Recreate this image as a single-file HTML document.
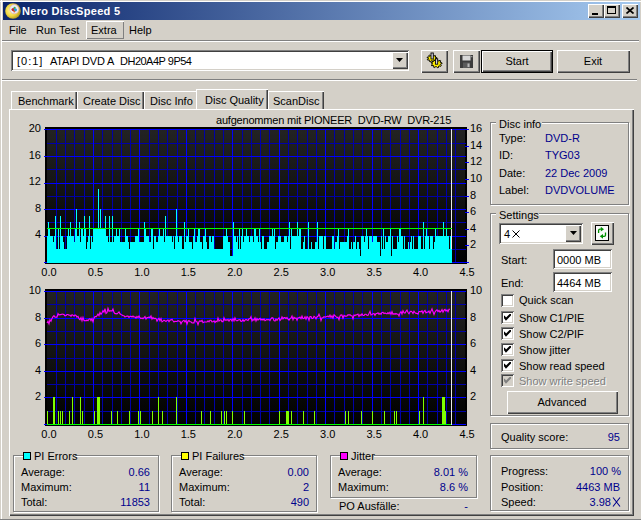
<!DOCTYPE html><html><head><meta charset="utf-8"><style>
html,body{margin:0;padding:0;width:641px;height:520px;overflow:hidden;background:#D4D0C8}
.t{position:absolute;font-family:"Liberation Sans",sans-serif;font-size:11px;line-height:13px;white-space:pre;letter-spacing:0px}
</style></head><body><div style="position:absolute;left:0px;top:0px;width:641px;height:520px;background:#D4D0C8"></div>
<div style="position:absolute;left:0px;top:1px;width:641px;height:1px;background:#FFFFFF"></div>
<div style="position:absolute;left:1px;top:0px;width:1px;height:520px;background:#FFFFFF"></div>
<div style="position:absolute;left:0px;top:519px;width:641px;height:1px;background:#808080"></div>
<div style="position:absolute;left:3px;top:2px;width:637px;height:18px;background:linear-gradient(to right,#0A246A,#A6CAF0)"></div>
<svg style="position:absolute;left:5px;top:3px" width="16" height="16" viewBox="0 0 16 16">
<defs><radialGradient id="gd" cx="40%" cy="45%" r="65%"><stop offset="0" stop-color="#FFF8B0"/><stop offset="0.55" stop-color="#F0D840"/><stop offset="1" stop-color="#A08818"/></radialGradient></defs>
<circle cx="8" cy="8" r="7.8" fill="url(#gd)"/>
<circle cx="9.3" cy="6.2" r="4.6" fill="#E8EEF4" stroke="#E0A0B0" stroke-width="0.6"/>
<circle cx="8.2" cy="6.6" r="1.7" fill="#C82828"/>
<circle cx="10.4" cy="6.8" r="1.6" fill="#2898E0"/>
<circle cx="9.6" cy="4.8" r="1.1" fill="#40A850"/>
<circle cx="9.3" cy="8.6" r="1" fill="#E06030"/>
</svg>
<div class="t" style="left:22px;top:5px;color:#fff;font-weight:bold;font-size:11px;letter-spacing:0.3px">Nero DiscSpeed 5</div>
<div style="position:absolute;left:588px;top:4px;width:16px;height:14px;background:#D4D0C8;box-shadow:inset 1px 1px 0 #FFFFFF,inset -1px -1px 0 #404040,inset -2px -2px 0 #808080;"></div>
<div style="position:absolute;left:604px;top:4px;width:16px;height:14px;background:#D4D0C8;box-shadow:inset 1px 1px 0 #FFFFFF,inset -1px -1px 0 #404040,inset -2px -2px 0 #808080;"></div>
<div style="position:absolute;left:622px;top:4px;width:16px;height:14px;background:#D4D0C8;box-shadow:inset 1px 1px 0 #FFFFFF,inset -1px -1px 0 #404040,inset -2px -2px 0 #808080;"></div>
<div style="position:absolute;left:592px;top:13px;width:6px;height:2px;background:#000"></div>
<div style="position:absolute;left:607px;top:6px;width:9px;height:8px;border:1px solid #000;border-top-width:2px;box-sizing:border-box"></div>
<svg style="position:absolute;left:626px;top:7px" width="8" height="7" viewBox="0 0 8 7"><path d="M0.5 0.5 L7.5 6.5 M7.5 0.5 L0.5 6.5" stroke="#000" stroke-width="1.7"/></svg>
<div style="position:absolute;left:86px;top:21px;width:38px;height:18px;box-shadow:inset 1px 1px 0 #FFFFFF,inset -1px -1px 0 #808080;"></div>
<div class="t" style="left:9px;top:24px;color:#000;">File</div>
<div class="t" style="left:36px;top:24px;color:#000;">Run Test</div>
<div class="t" style="left:91px;top:24px;color:#000;">Extra</div>
<div class="t" style="left:129px;top:24px;color:#000;">Help</div>
<div style="position:absolute;left:2px;top:40px;width:637px;height:1px;background:#808080"></div>
<div style="position:absolute;left:2px;top:41px;width:637px;height:1px;background:#FFFFFF"></div>
<div style="position:absolute;left:11px;top:50px;width:398px;height:21px;background:#fff;box-shadow:inset 1px 1px 0 #808080,inset -1px -1px 0 #FFFFFF,inset 2px 2px 0 #404040,inset -2px -2px 0 #D4D0C8;"></div>
<div class="t" style="left:17px;top:55px;color:#000;letter-spacing:1px">[0:1]</div>
<div class="t" style="left:50px;top:55px;color:#000;letter-spacing:-0.2px">ATAPI DVD A</div>
<div class="t" style="left:120px;top:55px;color:#000;letter-spacing:-0.5px">DH20A4P 9P54</div>
<div style="position:absolute;left:392px;top:52px;width:16px;height:17px;background:#D4D0C8;box-shadow:inset 1px 1px 0 #FFFFFF,inset -1px -1px 0 #404040,inset -2px -2px 0 #808080;"></div>
<svg style="position:absolute;left:396px;top:58px" width="7" height="4"><path d="M0 0H7L3.5 4Z" fill="#000"/></svg>
<div style="position:absolute;left:421px;top:50px;width:27px;height:23px;background:#D4D0C8;box-shadow:inset 1px 1px 0 #FFFFFF,inset -1px -1px 0 #404040,inset -2px -2px 0 #808080;"></div>
<svg style="position:absolute;left:420px;top:50px" width="28" height="22" viewBox="0 0 28 22"><g stroke="#000" stroke-width="1" fill="#FFF000"><polygon points="12.00,4.70 12.87,4.75 13.23,5.86 13.80,6.06 15.21,5.54 15.83,5.99 15.12,7.00 15.38,7.41 16.92,7.67 17.00,8.30 15.55,8.75 15.38,9.19 16.33,10.10 15.83,10.61 14.31,10.29 13.80,10.54 13.71,11.68 12.87,11.85 12.00,10.89 11.37,10.85 10.29,11.68 9.50,11.42 9.69,10.29 9.24,9.97 7.67,10.10 7.30,9.53 8.45,8.75 8.40,8.30 7.08,7.67 7.30,7.07 8.88,7.00 9.24,6.63 8.79,5.54 9.50,5.18 10.77,5.86 11.37,5.75"/><polygon points="16.50,9.40 17.47,9.46 17.88,10.76 18.52,10.98 20.10,10.38 20.79,10.90 19.99,12.09 20.29,12.57 22.01,12.87 22.10,13.60 20.47,14.13 20.29,14.63 21.35,15.70 20.79,16.30 19.09,15.92 18.52,16.22 18.42,17.55 17.47,17.74 16.50,16.62 15.80,16.58 14.58,17.55 13.70,17.24 13.91,15.92 13.41,15.54 11.65,15.70 11.24,15.04 12.53,14.13 12.47,13.60 10.99,12.87 11.24,12.16 13.01,12.09 13.41,11.66 12.90,10.38 13.70,9.96 15.12,10.76 15.80,10.62"/></g><g stroke="#000" stroke-width="0.9" fill="#D0D0E0"><rect x="11" y="3" width="2.3" height="6"/><rect x="15.4" y="8.8" width="2.3" height="5.4"/></g></svg>
<div style="position:absolute;left:453px;top:50px;width:27px;height:23px;background:#D4D0C8;box-shadow:inset 1px 1px 0 #FFFFFF,inset -1px -1px 0 #404040,inset -2px -2px 0 #808080;"></div>
<svg style="position:absolute;left:460px;top:55px" width="13" height="13" viewBox="0 0 13 13">
<rect x="0" y="0" width="13" height="13" fill="#3C3C3C"/>
<rect x="2.5" y="0.5" width="8" height="5" fill="#D8D8D8"/>
<rect x="3" y="7.5" width="7" height="5.5" fill="#5A5A5A"/>
<rect x="7.5" y="8.5" width="2" height="3.5" fill="#B8B8B8"/>
<rect x="11.3" y="1.2" width="1" height="1" fill="#E0E0E0"/>
</svg>
<div style="position:absolute;left:481px;top:50px;width:72px;height:23px;background:#000"></div>
<div style="position:absolute;left:482px;top:51px;width:70px;height:21px;background:#D4D0C8;box-shadow:inset 1px 1px 0 #FFFFFF,inset -1px -1px 0 #404040,inset -2px -2px 0 #808080;"></div>
<div class="t" style="left:467px;width:100px;top:55px;color:#000;text-align:center;">Start</div>
<div style="position:absolute;left:557px;top:50px;width:73px;height:23px;background:#D4D0C8;box-shadow:inset 1px 1px 0 #FFFFFF,inset -1px -1px 0 #404040,inset -2px -2px 0 #808080;"></div>
<div class="t" style="left:543px;width:100px;top:55px;color:#000;text-align:center;">Exit</div>
<div style="position:absolute;left:2px;top:79px;width:635px;height:1px;background:#808080"></div>
<div style="position:absolute;left:2px;top:80px;width:635px;height:1px;background:#FFFFFF"></div>
<div style="position:absolute;left:11px;top:91px;width:66px;height:18px;background:#D4D0C8;box-shadow:inset 1px 1px 0 #FFFFFF,inset -1px 0 0 #404040,inset -2px 0 0 #808080;"></div>
<div class="t" style="left:18px;top:95px;color:#000;">Benchmark</div>
<div style="position:absolute;left:77px;top:91px;width:67px;height:18px;background:#D4D0C8;box-shadow:inset 1px 1px 0 #FFFFFF,inset -1px 0 0 #404040,inset -2px 0 0 #808080;"></div>
<div class="t" style="left:83px;top:95px;color:#000;">Create Disc</div>
<div style="position:absolute;left:144px;top:91px;width:54px;height:18px;background:#D4D0C8;box-shadow:inset 1px 1px 0 #FFFFFF,inset -1px 0 0 #404040,inset -2px 0 0 #808080;"></div>
<div class="t" style="left:150px;top:95px;color:#000;">Disc Info</div>
<div style="position:absolute;left:268px;top:91px;width:56px;height:18px;background:#D4D0C8;box-shadow:inset 1px 1px 0 #FFFFFF,inset -1px 0 0 #404040,inset -2px 0 0 #808080;"></div>
<div class="t" style="left:273px;top:95px;color:#000;">ScanDisc</div>
<div style="position:absolute;left:9px;top:109px;width:625px;height:407px;background:#D4D0C8;box-shadow:inset 1px 1px 0 #FFFFFF,inset -1px -1px 0 #404040,inset -2px -2px 0 #808080;"></div>
<div style="position:absolute;left:196px;top:89px;width:72px;height:20px;background:#D4D0C8;box-shadow:inset 1px 1px 0 #FFFFFF,inset -1px 0 0 #404040,inset -2px 0 0 #808080;"></div>
<div class="t" style="left:205px;top:94px;color:#000;">Disc Quality</div>
<div style="position:absolute;left:197px;top:109px;width:68px;height:1px;background:#FFFFFF"></div>
<svg style="position:absolute;left:0;top:0" width="641" height="520">
<defs><linearGradient id="bg" x1="0" y1="0" x2="0" y2="1"><stop offset="0" stop-color="#232323"/><stop offset="1" stop-color="#000"/></linearGradient></defs>
<rect x="45" y="127" width="422" height="137" fill="#000"/>
<rect x="47" y="129" width="418" height="134" fill="url(#bg)"/>
<path d="M56.5 129V263.4 M65.5 129V263.4 M74.5 129V263.4 M84.5 129V263.4 M102.5 129V263.4 M112.5 129V263.4 M121.5 129V263.4 M130.5 129V263.4 M149.5 129V263.4 M158.5 129V263.4 M167.5 129V263.4 M177.5 129V263.4 M195.5 129V263.4 M204.5 129V263.4 M214.5 129V263.4 M223.5 129V263.4 M242.5 129V263.4 M251.5 129V263.4 M260.5 129V263.4 M269.5 129V263.4 M288.5 129V263.4 M297.5 129V263.4 M307.5 129V263.4 M316.5 129V263.4 M334.5 129V263.4 M344.5 129V263.4 M353.5 129V263.4 M362.5 129V263.4 M381.5 129V263.4 M390.5 129V263.4 M400.5 129V263.4 M409.5 129V263.4 M427.5 129V263.4 M437.5 129V263.4 M446.5 129V263.4 M455.5 129V263.4 M47 249.5H466 M47 222.5H466 M47 196.5H466 M47 169.5H466 M47 143.5H466" stroke="#0000A8" stroke-width="1" shape-rendering="crispEdges"/>
<path d="M93.5 129V263.4 M139.5 129V263.4 M186.5 129V263.4 M232.5 129V263.4 M279.5 129V263.4 M325.5 129V263.4 M372.5 129V263.4 M418.5 129V263.4 M44 262.5H466 M44 236.5H466 M44 209.5H466 M44 183.5H466 M44 156.5H466 M44 129.5H466" stroke="#0000FF" stroke-width="1" shape-rendering="crispEdges"/>
<path d="M465 262.5H469 M465 245.5H469 M465 229.5H469 M465 212.5H469 M465 196.5H469 M465 179.5H469 M465 162.5H469 M465 146.5H469 M465 129.5H469" stroke="#0000FF" stroke-width="1" shape-rendering="crispEdges"/>
<path d="M451.5 129V263" stroke="#E8E8E8" stroke-width="1" shape-rendering="crispEdges"/>
<path d="M47 263V236H48V222H49V229H50V236H51V236H52V236H53V242H54V236H55V216H56V249H57V249H58V229H59V249H60V216H61V236H62V236H63V242H64V249H65V249H66V249H67V236H68V229H69V236H70V222H71V236H72V236H73V236H74V242H75V229H76V209H77V236H78V236H79V222H80V242H81V229H82V229H83V236H84V216H85V229H86V249H87V242H88V236H89V216H90V249H91V236H92V242H93V229H94V229H95V229H96V229H97V229H98V189H99V229H100V209H101V229H102V229H103V229H104V229H105V216H106V236H107V236H108V242H109V216H110V242H111V242H112V216H113V242H114V236H115V236H116V229H117V236H118V236H119V229H120V242H121V242H122V242H123V242H124V242H125V229H126V236H127V236H128V242H129V249H130V242H131V242H132V242H133V242H134V242H135V236H136V236H137V236H138V229H139V242H140V242H141V242H142V242H143V242H144V222H145V229H146V236H147V236H148V236H149V242H150V242H151V229H152V229H153V249H154V236H155V236H156V242H157V242H158V236H159V229H160V236H161V236H162V236H163V229H164V242H165V216H166V236H167V236H168V236H169V236H170V236H171V236H172V242H173V236H174V249H175V236H176V209H177V236H178V242H179V236H180V236H181V236H182V249H183V249H184V222H185V242H186V236H187V236H188V229H189V242H190V242H191V242H192V249H193V236H194V229H195V242H196V242H197V236H198V229H199V229H200V242H201V242H202V249H203V236H204V236H205V229H206V242H207V249H208V249H209V236H210V236H211V242H212V236H213V236H214V249H215V249H216V249H217V249H218V249H219V249H220V249H221V249H222V249H223V236H224V236H225V236H226V229H227V236H228V242H229V242H230V256H231V256H232V256H233V222H234V236H235V236H236V242H237V236H238V249H239V229H240V249H241V236H242V229H243V242H244V236H245V236H246V229H247V236H248V236H249V242H250V236H251V236H252V236H253V242H254V229H255V229H256V236H257V236H258V242H259V229H260V242H261V249H262V236H263V236H264V249H265V249H266V249H267V242H268V242H269V236H270V236H271V236H272V229H273V236H274V229H275V249H276V242H277V242H278V236H279V236H280V236H281V242H282V242H283V242H284V236H285V236H286V236H287V242H288V236H289V222H290V249H291V229H292V236H293V236H294V236H295V236H296V236H297V222H298V236H299V229H300V229H301V249H302V249H303V242H304V236H305V249H306V249H307V249H308V222H309V249H310V249H311V242H312V249H313V249H314V249H315V242H316V242H317V222H318V249H319V236H320V236H321V236H322V236H323V249H324V236H325V236H326V249H327V249H328V249H329V249H330V249H331V249H332V236H333V236H334V249H335V242H336V242H337V236H338V229H339V249H340V242H341V242H342V242H343V242H344V242H345V242H346V242H347V236H348V229H349V249H350V249H351V242H352V249H353V242H354V242H355V236H356V249H357V242H358V242H359V249H360V256H361V236H362V236H363V236H364V242H365V236H366V229H367V236H368V249H369V236H370V236H371V236H372V242H373V236H374V236H375V236H376V236H377V242H378V242H379V242H380V256H381V236H382V249H383V229H384V249H385V236H386V242H387V242H388V236H389V236H390V229H391V256H392V236H393V249H394V249H395V249H396V249H397V236H398V242H399V229H400V229H401V236H402V236H403V249H404V236H405V249H406V249H407V249H408V242H409V249H410V242H411V236H412V249H413V236H414V249H415V249H416V249H417V249H418V236H419V236H420V236H421V249H422V249H423V222H424V249H425V236H426V229H427V236H428V236H429V249H430V236H431V236H432V236H433V249H434V242H435V229H436V236H437V236H438V236H439V236H440V236H441V236H442V236H443V222H444V236H445V236H446V229H447V236H448V236H449V249H450V236H451V249H452V263Z" fill="#00FFFF" shape-rendering="crispEdges"/>
<path d="M47 228.5H452" stroke="#00FF00" stroke-width="1" shape-rendering="crispEdges"/>
<rect x="45" y="289" width="422" height="137" fill="#000"/>
<rect x="47" y="291" width="418" height="134" fill="url(#bg)"/>
<path d="M56.5 291V425 M65.5 291V425 M74.5 291V425 M84.5 291V425 M102.5 291V425 M112.5 291V425 M121.5 291V425 M130.5 291V425 M149.5 291V425 M158.5 291V425 M167.5 291V425 M177.5 291V425 M195.5 291V425 M204.5 291V425 M214.5 291V425 M223.5 291V425 M242.5 291V425 M251.5 291V425 M260.5 291V425 M269.5 291V425 M288.5 291V425 M297.5 291V425 M307.5 291V425 M316.5 291V425 M334.5 291V425 M344.5 291V425 M353.5 291V425 M362.5 291V425 M381.5 291V425 M390.5 291V425 M400.5 291V425 M409.5 291V425 M427.5 291V425 M437.5 291V425 M446.5 291V425 M455.5 291V425 M47 411.5H466 M47 384.5H466 M47 358.5H466 M47 331.5H466 M47 304.5H466" stroke="#0000A8" stroke-width="1" shape-rendering="crispEdges"/>
<path d="M93.5 291V425 M139.5 291V425 M186.5 291V425 M232.5 291V425 M279.5 291V425 M325.5 291V425 M372.5 291V425 M418.5 291V425 M44 424.5H466 M44 397.5H466 M44 371.5H466 M44 344.5H466 M44 318.5H466 M44 291.5H466" stroke="#0000FF" stroke-width="1" shape-rendering="crispEdges"/>
<rect x="47" y="411" width="1" height="14" fill="#80FF00"/>
<rect x="53" y="397" width="2" height="28" fill="#80FF00"/>
<rect x="58" y="411" width="1" height="14" fill="#80FF00"/>
<rect x="60" y="411" width="1" height="14" fill="#80FF00"/>
<rect x="62" y="411" width="1" height="14" fill="#80FF00"/>
<rect x="69" y="411" width="1" height="14" fill="#80FF00"/>
<rect x="72" y="397" width="1" height="28" fill="#80FF00"/>
<rect x="80" y="397" width="1" height="28" fill="#80FF00"/>
<rect x="82" y="411" width="1" height="14" fill="#80FF00"/>
<rect x="94" y="411" width="1" height="14" fill="#80FF00"/>
<rect x="97" y="397" width="3" height="28" fill="#80FF00"/>
<rect x="111" y="411" width="1" height="14" fill="#80FF00"/>
<rect x="117" y="411" width="1" height="14" fill="#80FF00"/>
<rect x="129" y="411" width="1" height="14" fill="#80FF00"/>
<rect x="138" y="411" width="1" height="14" fill="#80FF00"/>
<rect x="140" y="411" width="1" height="14" fill="#80FF00"/>
<rect x="152" y="411" width="1" height="14" fill="#80FF00"/>
<rect x="158" y="397" width="1" height="28" fill="#80FF00"/>
<rect x="162" y="411" width="1" height="14" fill="#80FF00"/>
<rect x="176" y="397" width="1" height="28" fill="#80FF00"/>
<rect x="201" y="411" width="1" height="14" fill="#80FF00"/>
<rect x="210" y="411" width="1" height="14" fill="#80FF00"/>
<rect x="221" y="411" width="1" height="14" fill="#80FF00"/>
<rect x="224" y="411" width="1" height="14" fill="#80FF00"/>
<rect x="226" y="411" width="1" height="14" fill="#80FF00"/>
<rect x="232" y="411" width="1" height="14" fill="#80FF00"/>
<rect x="244" y="411" width="1" height="14" fill="#80FF00"/>
<rect x="279" y="411" width="1" height="14" fill="#80FF00"/>
<rect x="286" y="411" width="2" height="14" fill="#80FF00"/>
<rect x="288" y="411" width="1" height="14" fill="#80FF00"/>
<rect x="291" y="411" width="1" height="14" fill="#80FF00"/>
<rect x="303" y="411" width="1" height="14" fill="#80FF00"/>
<rect x="314" y="411" width="1" height="14" fill="#80FF00"/>
<rect x="345" y="411" width="1" height="14" fill="#80FF00"/>
<rect x="348" y="411" width="1" height="14" fill="#80FF00"/>
<rect x="361" y="411" width="1" height="14" fill="#80FF00"/>
<rect x="372" y="411" width="1" height="14" fill="#80FF00"/>
<rect x="384" y="411" width="1" height="14" fill="#80FF00"/>
<rect x="394" y="411" width="1" height="14" fill="#80FF00"/>
<rect x="396" y="411" width="1" height="14" fill="#80FF00"/>
<rect x="419" y="411" width="1" height="14" fill="#80FF00"/>
<rect x="423" y="397" width="1" height="28" fill="#80FF00"/>
<rect x="442" y="397" width="3" height="28" fill="#80FF00"/>
<rect x="445" y="411" width="1" height="14" fill="#80FF00"/>
<path d="M47 424.5H452" stroke="#00FF00" stroke-width="1" shape-rendering="crispEdges"/>
<polyline points="47,323.0 48,321.3 49,323.9 50,319.7 51,321.2 52,318.4 53,316.7 54,315.7 55,317.2 56,317.0 57,317.1 58,313.6 59,315.1 60,314.6 61,314.6 62,314.0 63,314.3 64,314.6 65,315.9 66,315.5 67,314.5 68,314.5 69,315.2 70,315.1 71,316.3 72,314.7 73,315.2 74,316.1 75,314.9 76,315.4 77,317.1 78,316.4 79,318.6 80,319.8 81,317.6 82,320.8 83,317.4 84,320.7 85,320.5 86,320.9 87,320.0 88,320.8 89,319.2 90,318.8 91,320.8 92,318.6 93,321.8 94,318.1 95,316.4 96,316.9 97,315.6 98,314.1 99,315.7 100,312.5 101,314.4 102,312.7 103,310.7 104,312.2 105,308.7 106,313.4 107,312.6 108,308.3 109,311.2 110,310.9 111,310.8 112,311.1 113,309.0 114,312.4 115,313.6 116,313.6 117,313.8 118,312.9 119,311.9 120,313.8 121,314.5 122,315.1 123,315.6 124,315.7 125,317.0 126,316.4 127,316.0 128,316.1 129,317.4 130,316.3 131,316.4 132,317.0 133,316.1 134,317.2 135,316.8 136,318.1 137,316.5 138,317.6 139,316.0 140,317.8 141,318.6 142,318.0 143,318.8 144,317.7 145,316.6 146,319.1 147,317.5 148,317.6 149,317.0 150,317.8 151,315.9 152,319.1 153,317.5 154,318.8 155,318.2 156,318.6 157,321.2 158,319.4 159,318.3 160,320.8 161,318.6 162,321.9 163,321.2 164,320.2 165,320.8 166,321.6 167,320.4 168,320.0 169,321.7 170,320.1 171,319.9 172,319.2 173,320.8 174,322.0 175,321.4 176,321.5 177,321.5 178,320.6 179,321.1 180,321.2 181,323.8 182,321.8 183,320.9 184,320.2 185,322.0 186,320.4 187,324.1 188,321.2 189,320.5 190,321.8 191,321.8 192,323.0 193,322.9 194,322.9 195,318.5 196,321.7 197,321.7 198,324.8 199,321.6 200,320.8 201,321.6 202,320.4 203,322.7 204,322.0 205,322.0 206,322.0 207,322.0 208,320.9 209,321.9 210,320.2 211,320.2 212,321.9 213,321.8 214,320.8 215,322.5 216,321.3 217,321.8 218,318.0 219,321.2 220,320.0 221,319.9 222,321.6 223,321.6 224,317.8 225,320.4 226,319.7 227,320.3 228,319.3 229,321.2 230,319.5 231,319.4 232,321.1 233,318.6 234,321.0 235,317.9 236,320.4 237,320.8 238,320.3 239,319.8 240,319.7 241,321.4 242,321.3 243,319.6 244,321.3 245,320.1 246,319.5 247,320.0 248,320.5 249,318.7 250,318.7 251,316.7 252,321.1 253,319.3 254,320.3 255,317.8 256,321.0 257,318.5 258,320.2 259,319.2 260,318.4 261,320.1 262,319.1 263,320.1 264,319.0 265,320.7 266,320.0 267,319.4 268,319.9 269,319.4 270,320.5 271,318.8 272,317.7 273,318.0 274,320.7 275,321.1 276,319.1 277,320.3 278,319.0 279,317.8 280,320.5 281,319.4 282,316.9 283,318.9 284,317.6 285,317.6 286,318.7 287,317.5 288,319.2 289,320.1 290,318.6 291,318.1 292,316.0 293,319.7 294,317.2 295,318.4 296,317.9 297,320.3 298,317.8 299,317.7 300,317.0 301,318.7 302,316.1 303,318.6 304,318.5 305,316.8 306,319.2 307,316.7 308,317.4 309,320.3 310,316.6 311,316.6 312,318.5 313,318.2 314,316.4 315,317.1 316,318.8 317,317.0 318,316.3 319,314.2 320,316.6 321,320.6 322,317.8 323,317.8 324,316.7 325,317.2 326,316.7 327,316.6 328,315.9 329,317.0 330,315.0 331,317.5 332,315.7 333,318.1 334,314.8 335,315.6 336,316.7 337,317.5 338,317.1 339,319.7 340,316.0 341,314.9 342,315.1 343,318.3 344,315.4 345,316.1 346,316.1 347,316.0 348,314.7 349,315.1 350,314.6 351,315.7 352,315.7 353,318.8 354,315.0 355,315.5 356,314.9 357,314.8 358,314.1 359,316.4 360,314.6 361,315.6 362,313.8 363,315.5 364,315.4 365,314.3 366,314.3 367,315.2 368,315.4 369,313.4 370,311.3 371,314.9 372,314.4 373,313.8 374,313.7 375,315.4 376,313.6 377,313.5 378,312.8 379,314.4 380,313.3 381,314.3 382,312.5 383,312.4 384,313.6 385,313.0 386,313.5 387,313.9 388,312.6 389,313.8 390,312.1 391,314.4 392,311.7 393,314.4 394,313.6 395,314.3 396,313.5 397,314.2 398,314.1 399,316.1 400,312.9 401,311.6 402,314.0 403,310.7 404,312.7 405,313.1 406,311.4 407,310.1 408,312.5 409,313.7 410,311.9 411,311.2 412,311.8 413,313.5 414,311.1 415,312.7 416,313.4 417,313.3 418,314.1 419,311.5 420,311.5 421,311.9 422,310.7 423,313.3 424,311.3 425,310.5 426,312.9 427,312.1 428,312.1 429,311.0 430,313.4 431,310.9 432,308.8 433,311.8 434,314.4 435,312.0 436,310.6 437,309.9 438,311.5 439,310.5 440,312.1 441,311.3 442,309.6 443,312.2 444,310.2 445,309.4 446,311.1 447,310.0 448,311.7 449,309.2 450,309.2" fill="none" stroke="#FF00FF" stroke-width="1.1" stroke-linejoin="miter"/>
<path d="M451.5 291V425" stroke="#E8E8E8" stroke-width="1" shape-rendering="crispEdges"/>
</svg>
<div class="t" style="right:600px;top:122px;text-align:right">20</div>
<div class="t" style="right:600px;top:149px;text-align:right">16</div>
<div class="t" style="right:600px;top:175px;text-align:right">12</div>
<div class="t" style="right:600px;top:202px;text-align:right">8</div>
<div class="t" style="right:600px;top:228px;text-align:right">4</div>
<div class="t" style="left:470px;top:122px">16</div>
<div class="t" style="left:470px;top:139px">14</div>
<div class="t" style="left:470px;top:155px">12</div>
<div class="t" style="left:470px;top:172px">10</div>
<div class="t" style="left:470px;top:189px">8</div>
<div class="t" style="left:470px;top:205px">6</div>
<div class="t" style="left:470px;top:222px">4</div>
<div class="t" style="left:470px;top:238px">2</div>
<div class="t" style="left:19.0px;width:60px;top:266px;text-align:center">0.0</div>
<div class="t" style="left:65.45px;width:60px;top:266px;text-align:center">0.5</div>
<div class="t" style="left:111.9px;width:60px;top:266px;text-align:center">1.0</div>
<div class="t" style="left:158.35000000000002px;width:60px;top:266px;text-align:center">1.5</div>
<div class="t" style="left:204.8px;width:60px;top:266px;text-align:center">2.0</div>
<div class="t" style="left:251.25px;width:60px;top:266px;text-align:center">2.5</div>
<div class="t" style="left:297.70000000000005px;width:60px;top:266px;text-align:center">3.0</div>
<div class="t" style="left:344.15000000000003px;width:60px;top:266px;text-align:center">3.5</div>
<div class="t" style="left:390.6px;width:60px;top:266px;text-align:center">4.0</div>
<div class="t" style="left:437.05px;width:60px;top:266px;text-align:center">4.5</div>
<div class="t" style="right:600px;top:284px;text-align:right">10</div>
<div class="t" style="left:470px;top:284px">10</div>
<div class="t" style="right:600px;top:311px;text-align:right">8</div>
<div class="t" style="left:470px;top:311px">8</div>
<div class="t" style="right:600px;top:337px;text-align:right">6</div>
<div class="t" style="left:470px;top:337px">6</div>
<div class="t" style="right:600px;top:364px;text-align:right">4</div>
<div class="t" style="left:470px;top:364px">4</div>
<div class="t" style="right:600px;top:390px;text-align:right">2</div>
<div class="t" style="left:470px;top:390px">2</div>
<div class="t" style="left:19.0px;width:60px;top:428px;text-align:center">0.0</div>
<div class="t" style="left:65.45px;width:60px;top:428px;text-align:center">0.5</div>
<div class="t" style="left:111.9px;width:60px;top:428px;text-align:center">1.0</div>
<div class="t" style="left:158.35000000000002px;width:60px;top:428px;text-align:center">1.5</div>
<div class="t" style="left:204.8px;width:60px;top:428px;text-align:center">2.0</div>
<div class="t" style="left:251.25px;width:60px;top:428px;text-align:center">2.5</div>
<div class="t" style="left:297.70000000000005px;width:60px;top:428px;text-align:center">3.0</div>
<div class="t" style="left:344.15000000000003px;width:60px;top:428px;text-align:center">3.5</div>
<div class="t" style="left:390.6px;width:60px;top:428px;text-align:center">4.0</div>
<div class="t" style="left:437.05px;width:60px;top:428px;text-align:center">4.5</div>
<div class="t" style="left:216px;top:114px"><span style="letter-spacing:-0.2px">aufgenommen mit PIONEER&nbsp; DVD-RW&nbsp; DVR-215</span></div>
<div style="position:absolute;left:490px;top:122px;width:139px;height:83px;border:1px solid #808080;box-sizing:border-box;box-shadow:1px 1px 0 #FFFFFF,inset 1px 1px 0 #FFFFFF;"></div>
<div style="position:absolute;left:496px;top:117px;width:46px;height:12px;background:#D4D0C8"></div>
<div class="t" style="left:499px;top:118px;color:#000;">Disc info</div>
<div class="t" style="left:499px;top:132px;color:#000;">Type:</div>
<div class="t" style="left:545px;top:132px;color:#00008C;">DVD-R</div>
<div class="t" style="left:499px;top:149px;color:#000;">ID:</div>
<div class="t" style="left:545px;top:149px;color:#00008C;">TYG03</div>
<div class="t" style="left:499px;top:167px;color:#000;">Date:</div>
<div class="t" style="left:545px;top:167px;color:#00008C;">22 Dec 2009</div>
<div class="t" style="left:499px;top:184px;color:#000;">Label:</div>
<div class="t" style="left:545px;top:184px;color:#00008C;">DVDVOLUME</div>
<div style="position:absolute;left:490px;top:213px;width:139px;height:203px;border:1px solid #808080;box-sizing:border-box;box-shadow:1px 1px 0 #FFFFFF,inset 1px 1px 0 #FFFFFF;"></div>
<div style="position:absolute;left:496px;top:207px;width:43px;height:12px;background:#D4D0C8"></div>
<div class="t" style="left:499px;top:209px;color:#000;">Settings</div>
<div style="position:absolute;left:499px;top:223px;width:84px;height:21px;background:#fff;box-shadow:inset 1px 1px 0 #808080,inset -1px -1px 0 #FFFFFF,inset 2px 2px 0 #404040,inset -2px -2px 0 #D4D0C8;"></div>
<div class="t" style="left:504px;top:228px;color:#000;">4</div>
<svg style="position:absolute;left:512px;top:230px" width="8" height="8" viewBox="0 0 8 8"><path d="M0.5 0.5L7.5 7.5M7.5 0.5L0.5 7.5" stroke="#000" stroke-width="1"/></svg>
<div style="position:absolute;left:565px;top:225px;width:16px;height:17px;background:#D4D0C8;box-shadow:inset 1px 1px 0 #FFFFFF,inset -1px -1px 0 #404040,inset -2px -2px 0 #808080;"></div>
<svg style="position:absolute;left:570px;top:231px" width="7" height="4"><path d="M0 0H7L3.5 4Z" fill="#000"/></svg>
<div style="position:absolute;left:591px;top:222px;width:23px;height:23px;background:#D4D0C8;box-shadow:inset 1px 1px 0 #FFFFFF,inset -1px -1px 0 #404040,inset -2px -2px 0 #808080;"></div>
<svg style="position:absolute;left:595px;top:225px" width="14" height="16" viewBox="0 0 14 16">
<rect x="0.5" y="0.5" width="13" height="15" fill="#FAFAFA" stroke="#000"/>
<path d="M3.6 8 V5.5 Q3.6 4.2 5 4.2 H6.2" stroke="#009000" stroke-width="1.3" fill="none"/><path d="M5.8 1.8 L9 4.2 L5.8 6.6Z" fill="#009000"/>
<path d="M10.5 7.5 V10.2 Q10.5 11.3 9.2 11.3 H7.5" stroke="#009000" stroke-width="1.3" fill="none"/><path d="M8 8.9 L4.8 11.3 L8 13.7Z" fill="#009000"/>
</svg>
<div class="t" style="left:501px;top:254px;color:#000;">Start:</div>
<div style="position:absolute;left:553px;top:249px;width:59px;height:20px;background:#fff;box-shadow:inset 1px 1px 0 #808080,inset -1px -1px 0 #FFFFFF,inset 2px 2px 0 #404040,inset -2px -2px 0 #D4D0C8;"></div>
<div class="t" style="left:557px;top:254px;color:#000;">0000 MB</div>
<div class="t" style="left:501px;top:277px;color:#000;">End:</div>
<div style="position:absolute;left:553px;top:272px;width:59px;height:20px;background:#fff;box-shadow:inset 1px 1px 0 #808080,inset -1px -1px 0 #FFFFFF,inset 2px 2px 0 #404040,inset -2px -2px 0 #D4D0C8;"></div>
<div class="t" style="left:557px;top:277px;color:#000;">4464 MB</div>
<div style="position:absolute;left:501px;top:294px;width:13px;height:13px;background:#fff;box-shadow:inset 1px 1px 0 #808080,inset -1px -1px 0 #FFFFFF,inset 2px 2px 0 #404040,inset -2px -2px 0 #D4D0C8;"></div>
<div class="t" style="left:519px;top:294px;color:#000;">Quick scan</div>
<div style="position:absolute;left:501px;top:311px;width:13px;height:13px;background:#fff;box-shadow:inset 1px 1px 0 #808080,inset -1px -1px 0 #FFFFFF,inset 2px 2px 0 #404040,inset -2px -2px 0 #D4D0C8;"></div>
<svg style="position:absolute;left:504px;top:314px" width="7" height="7" viewBox="0 0 7 7"><path d="M0 2 L2 4.5 L7 -0.5 M0 3.2 L2 5.7 L7 0.7" stroke="#000" stroke-width="1.3" fill="none"/></svg>
<div class="t" style="left:519px;top:312px;color:#000;">Show C1/PIE</div>
<div style="position:absolute;left:501px;top:327px;width:13px;height:13px;background:#fff;box-shadow:inset 1px 1px 0 #808080,inset -1px -1px 0 #FFFFFF,inset 2px 2px 0 #404040,inset -2px -2px 0 #D4D0C8;"></div>
<svg style="position:absolute;left:504px;top:330px" width="7" height="7" viewBox="0 0 7 7"><path d="M0 2 L2 4.5 L7 -0.5 M0 3.2 L2 5.7 L7 0.7" stroke="#000" stroke-width="1.3" fill="none"/></svg>
<div class="t" style="left:519px;top:328px;color:#000;">Show C2/PIF</div>
<div style="position:absolute;left:501px;top:343px;width:13px;height:13px;background:#fff;box-shadow:inset 1px 1px 0 #808080,inset -1px -1px 0 #FFFFFF,inset 2px 2px 0 #404040,inset -2px -2px 0 #D4D0C8;"></div>
<svg style="position:absolute;left:504px;top:346px" width="7" height="7" viewBox="0 0 7 7"><path d="M0 2 L2 4.5 L7 -0.5 M0 3.2 L2 5.7 L7 0.7" stroke="#000" stroke-width="1.3" fill="none"/></svg>
<div class="t" style="left:519px;top:344px;color:#000;">Show jitter</div>
<div style="position:absolute;left:501px;top:359px;width:13px;height:13px;background:#fff;box-shadow:inset 1px 1px 0 #808080,inset -1px -1px 0 #FFFFFF,inset 2px 2px 0 #404040,inset -2px -2px 0 #D4D0C8;"></div>
<svg style="position:absolute;left:504px;top:362px" width="7" height="7" viewBox="0 0 7 7"><path d="M0 2 L2 4.5 L7 -0.5 M0 3.2 L2 5.7 L7 0.7" stroke="#000" stroke-width="1.3" fill="none"/></svg>
<div class="t" style="left:519px;top:360px;color:#000;">Show read speed</div>
<div style="position:absolute;left:501px;top:374px;width:13px;height:13px;background:#D4D0C8;box-shadow:inset 1px 1px 0 #808080,inset -1px -1px 0 #FFFFFF,inset 2px 2px 0 #404040,inset -2px -2px 0 #D4D0C8;"></div>
<svg style="position:absolute;left:504px;top:377px" width="7" height="7" viewBox="0 0 7 7"><path d="M0 2 L2 4.5 L7 -0.5 M0 3.2 L2 5.7 L7 0.7" stroke="#808080" stroke-width="1.3" fill="none"/></svg>
<div class="t" style="left:519px;top:375px;color:#808080;text-shadow:1px 1px 0 #fff">Show write speed</div>
<div style="position:absolute;left:507px;top:391px;width:111px;height:23px;background:#D4D0C8;box-shadow:inset 1px 1px 0 #FFFFFF,inset -1px -1px 0 #404040,inset -2px -2px 0 #808080;"></div>
<div class="t" style="left:512px;width:100px;top:396px;color:#000;text-align:center;">Advanced</div>
<div style="position:absolute;left:490px;top:423px;width:139px;height:26px;border:1px solid #808080;box-sizing:border-box;box-shadow:1px 1px 0 #FFFFFF,inset 1px 1px 0 #FFFFFF;"></div>
<div class="t" style="left:501px;top:431px;color:#000;">Quality score:</div>
<div class="t" style="right:21px;top:431px;color:#00008C;text-align:right;">95</div>
<div style="position:absolute;left:490px;top:455px;width:139px;height:56px;border:1px solid #808080;box-sizing:border-box;box-shadow:1px 1px 0 #FFFFFF,inset 1px 1px 0 #FFFFFF;"></div>
<div class="t" style="left:501px;top:465px;color:#000;">Progress:</div>
<div class="t" style="right:20px;top:465px;color:#00008C;text-align:right;">100 %</div>
<div class="t" style="left:501px;top:481px;color:#000;">Position:</div>
<div class="t" style="right:21px;top:481px;color:#00008C;text-align:right;">4463 MB</div>
<div class="t" style="left:501px;top:496px;color:#000;">Speed:</div>
<div class="t" style="right:30px;top:496px;color:#00008C;text-align:right;">3.98</div>
<svg style="position:absolute;left:612px;top:497px" width="9" height="10" viewBox="0 0 9 10"><path d="M1 0.5L8 9.5M8 0.5L1 9.5" stroke="#00008C" stroke-width="1.1"/></svg>
<div style="position:absolute;left:13px;top:455px;width:146px;height:57px;border:1px solid #808080;box-sizing:border-box;box-shadow:1px 1px 0 #FFFFFF,inset 1px 1px 0 #FFFFFF;"></div>
<div style="position:absolute;left:23px;top:449px;width:52px;height:12px;background:#D4D0C8"></div>
<div style="position:absolute;left:23px;top:452px;width:8px;height:8px;background:#00FFFF;border:1px solid #000;box-sizing:border-box"></div>
<div class="t" style="left:34px;top:450px;color:#000;">PI Errors</div>
<div class="t" style="left:21px;top:466px;color:#000;">Average:</div>
<div class="t" style="right:491px;top:466px;color:#00008C;text-align:right;">0.66</div>
<div class="t" style="left:21px;top:481px;color:#000;">Maximum:</div>
<div class="t" style="right:491px;top:481px;color:#00008C;text-align:right;">11</div>
<div class="t" style="left:21px;top:496px;color:#000;">Total:</div>
<div class="t" style="right:491px;top:496px;color:#00008C;text-align:right;">11853</div>
<div style="position:absolute;left:171px;top:455px;width:146px;height:57px;border:1px solid #808080;box-sizing:border-box;box-shadow:1px 1px 0 #FFFFFF,inset 1px 1px 0 #FFFFFF;"></div>
<div style="position:absolute;left:181px;top:449px;width:61px;height:12px;background:#D4D0C8"></div>
<div style="position:absolute;left:181px;top:452px;width:8px;height:8px;background:#FFFF00;border:1px solid #000;box-sizing:border-box"></div>
<div class="t" style="left:192px;top:450px;color:#000;">PI Failures</div>
<div class="t" style="left:179px;top:466px;color:#000;">Average:</div>
<div class="t" style="right:332px;top:466px;color:#00008C;text-align:right;">0.00</div>
<div class="t" style="left:179px;top:481px;color:#000;">Maximum:</div>
<div class="t" style="right:332px;top:481px;color:#00008C;text-align:right;">2</div>
<div class="t" style="left:179px;top:496px;color:#000;">Total:</div>
<div class="t" style="right:332px;top:496px;color:#00008C;text-align:right;">490</div>
<div style="position:absolute;left:330px;top:455px;width:147px;height:43px;border:1px solid #808080;box-sizing:border-box;box-shadow:1px 1px 0 #FFFFFF,inset 1px 1px 0 #FFFFFF;"></div>
<div style="position:absolute;left:340px;top:449px;width:34px;height:12px;background:#D4D0C8"></div>
<div style="position:absolute;left:340px;top:452px;width:8px;height:8px;background:#FF00FF;border:1px solid #000;box-sizing:border-box"></div>
<div class="t" style="left:351px;top:450px;color:#000;">Jitter</div>
<div class="t" style="left:338px;top:466px;color:#000;">Average:</div>
<div class="t" style="right:173px;top:466px;color:#00008C;text-align:right;">8.01 %</div>
<div class="t" style="left:338px;top:481px;color:#000;">Maximum:</div>
<div class="t" style="right:173px;top:481px;color:#00008C;text-align:right;">8.6 %</div>
<div class="t" style="left:339px;top:500px;color:#000;">PO Ausf&auml;lle:</div>
<div class="t" style="right:173px;top:500px;color:#00008C;text-align:right;">-</div></body></html>
